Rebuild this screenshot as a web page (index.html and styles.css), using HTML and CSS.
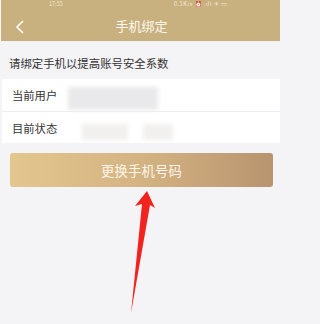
FILE: index.html
```html
<!DOCTYPE html>
<html lang="zh-CN">
<head>
<meta charset="utf-8">
<link rel="stylesheet" href="styles.css">
</head>
<body>
<div class="page">
  <header class="header">
    <div class="status">
      <span class="time">17:55</span>
      <span class="sys">0.5K/s ⏰ .ıll ✈ ▭</span>
    </div>
    <div class="nav">
      <svg class="back" width="10" height="14" viewBox="0 0 10 14"><path d="M8 1 L2 7 L8 13" fill="none" stroke="#fff" stroke-width="1.6"/></svg>
      <div class="title">手机绑定</div>
    </div>
  </header>
  <div class="hint">请绑定手机以提高账号安全系数</div>
  <section class="card">
    <div class="row">
      <span class="label">当前用户</span>
      <span class="blur blur-user"></span>
    </div>
    <div class="row">
      <span class="label">目前状态</span>
      <span class="blur blur-s1"></span>
      <span class="blur blur-s2"></span>
    </div>
  </section>
  <div class="btn-wrap">
    <button class="btn">更换手机号码</button>
  </div>
</div>
<svg class="arrow" width="284" height="324" viewBox="0 0 284 324">
  <polygon points="147,191 155,208 150,205 131,313 142,204 135,206" fill="#f2231e"/>
</svg>
</body>
</html>
```
FILE: styles.css
```css
html, body {
  margin: 0;
  padding: 0;
  background: #f4f3f5;
  font-family: "Noto Sans CJK SC", "Noto Sans", sans-serif;
}
.page {
  width: 279px;
  margin-left: 1px;
  height: 324px;
  overflow: hidden;
}
.header {
  background: #c9b17f;
  height: 41px;
  color: #fff;
}
.status {
  height: 8px;
  position: relative;
  font-size: 5.5px;
  line-height: 7px;
  color: #f3ead6;
}
.time {
  position: absolute;
  left: 48px;
  top: 1px;
}
.sys {
  position: absolute;
  left: 173px;
  top: 1px;
  letter-spacing: 0.5px;
}
.nav {
  height: 33px;
  display: flex;
  align-items: center;
  justify-content: center;
  position: relative;
}
.back {
  position: absolute;
  left: 14px;
  top: 12px;
}
.title {
  font-size: 13px;
  color: #fdf8ee;
  margin-left: 2px;
  margin-top: 1px;
}
.hint {
  height: 38px;
  display: flex;
  align-items: center;
  padding-left: 8px;
  padding-top: 6px;
  box-sizing: border-box;
  font-size: 11.4px;
  color: #333;
}
.card {
  background: #fff;
  margin: 0 0 0 1px;
  display: flex;
  flex-direction: column;
}
.row {
  height: 32px;
  display: flex;
  align-items: center;
  padding-left: 10px;
  font-size: 11.3px;
  color: #333;
  position: relative;
}
.row + .row {
  border-top: 1px solid #ededed;
  height: 31px;
}
.blur {
  position: absolute;
  filter: blur(2px);
}
.blur-user {
  left: 66px;
  top: 8px;
  width: 90px;
  height: 23px;
  background: #e9e9eb;
}
.blur-s1 {
  left: 80px;
  top: 12px;
  width: 46px;
  height: 16px;
  background: #f1f0ef;
}
.blur-s2 {
  left: 141px;
  top: 12px;
  width: 30px;
  height: 16px;
  background: #f1f0ef;
}
.btn-wrap {
  padding: 10px 7px 0 9px;
}
.btn {
  display: block;
  width: 100%;
  height: 34px;
  border: none;
  border-radius: 3px;
  background: linear-gradient(90deg, #e3c78f 0%, #d4b382 50%, #b8946f 100%);
  color: #fdf6ea;
  font-family: "Noto Sans CJK SC", "Noto Sans", sans-serif;
  font-size: 13.3px;
  letter-spacing: 0.2px;
  padding: 0;
}
.arrow {
  position: absolute;
  left: 0;
  top: 0;
  pointer-events: none;
}
```
